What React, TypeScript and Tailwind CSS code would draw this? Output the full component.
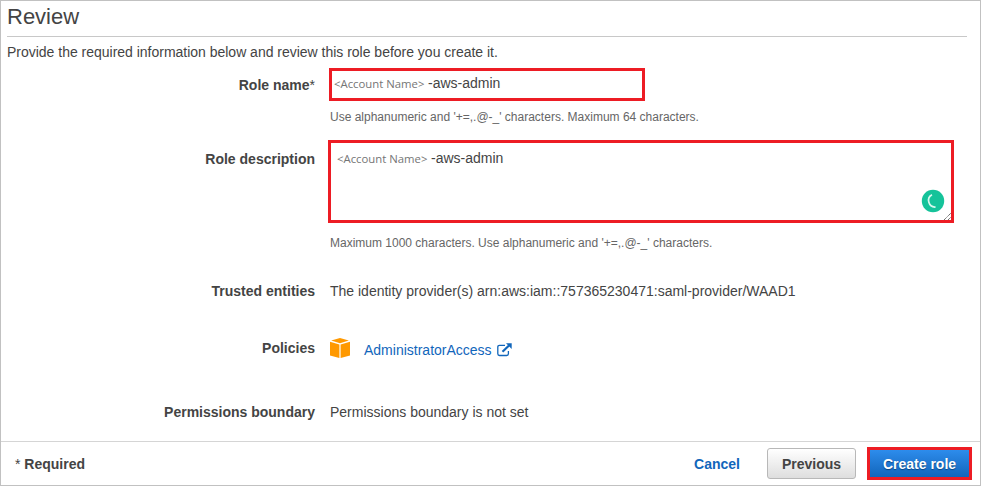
import type { ReactNode } from 'react';

function Label({ children, className = '' }: { children: ReactNode; className?: string }) {
  return (
    <div className={`w-[314px] shrink-0 text-right text-[14px] leading-5 font-bold ${className}`}>{children}</div>
  );
}

function AccountName() {
  return (
    <span className="inline-block w-[94px] shrink-0 pt-px whitespace-nowrap font-['Open_Sans','Noto_Sans',sans-serif] text-[11.35px] leading-5 text-[#757575]">
      &lt;Account Name&gt;
    </span>
  );
}

function PolicyCube() {
  return (
    <svg width="20" height="20" viewBox="0 0 20 20" fill="#ff9900" className="shrink-0">
      <path d="M10 0 18.8 2.6 10 5.2 1.2 2.6Z" />
      <path d="M0 3.8 9.4 6.6V20L0 17.6Z" />
      <path d="M20 3.8 10.6 6.6V20L20 17.6Z" />
    </svg>
  );
}

function ExternalLink() {
  return (
    <svg width="15" height="14" viewBox="0 0 15 14" fill="none" stroke="#1166bb" className="shrink-0">
      <path d="M8 2.3H2.5Q.8 2.3.8 4V10.8Q.8 12.5 2.5 12.5H9.7Q11.4 12.5 11.4 10.8V8" strokeWidth="1.3" />
      <path d="M5.5 8.7 12 2.5" strokeWidth="2.2" />
      <path d="M9 .3H14.7V6Z" fill="#1166bb" stroke="none" />
    </svg>
  );
}

export default function App() {
  return (
    <div className="flex h-[486px] w-[981px] flex-col overflow-hidden border border-[#c1c1c1] bg-white font-['Liberation_Sans',Arial,sans-serif] text-[14px] leading-5 text-[#444]">
      <h1 className="ml-1.5 h-9 w-[960px] shrink-0 border-b border-[#c8c8c8] text-[22px] leading-8">Review</h1>
      <p className="mt-[5px] ml-1.5 h-[26px] shrink-0 tracking-[-0.012px]">
        Provide the required information below and review this role before you create it.
      </p>

      <div className="flex h-[72px] shrink-0">
        <Label className="pt-[7px]">
          Role name<span className="font-normal">*</span>
        </Label>
        <div className="ml-[14px]">
          <div className="flex h-[33px] w-[316px] border-[3px] border-[#ed1c24] pt-[2px] pl-[2px]">
            <AccountName />
            <span>-aws-admin</span>
          </div>
          <p className="mt-[6px] ml-px text-[12px] text-[#666]">
            Use alphanumeric and '+=,.@-_' characters. Maximum 64 characters.
          </p>
        </div>
      </div>

      <div className="flex h-[141px] shrink-0">
        <Label className="pt-[9px]">Role description</Label>
        <div className="ml-[13px]">
          <div className="relative flex h-[83px] w-[626px] border-[3px] border-[#ed1c24] pt-[5px] pl-[6px]">
            <AccountName />
            <span>-aws-admin</span>
            <svg className="absolute right-[6px] bottom-[7px]" width="24" height="24" viewBox="0 0 24 24" fill="none">
              <circle cx="12" cy="12" r="11.2" fill="#15c39a" />
              <path d="M11 5.8A6.5 6.5 0 0 0 14.6 18" stroke="#d8f8ee" strokeWidth="1.7" />
            </svg>
            <svg className="absolute right-0 bottom-0" width="7" height="7" viewBox="0 0 7 7" stroke="#555">
              <path d="M0 7 7 0M4 7 7 4" strokeDasharray="1.2 .6" />
            </svg>
          </div>
          <p className="mt-[10px] ml-[2px] text-[12px] text-[#666]">
            Maximum 1000 characters. Use alphanumeric and '+=,.@-_' characters.
          </p>
        </div>
      </div>

      <div className="flex h-[57px] shrink-0">
        <Label>Trusted entities</Label>
        <p className="ml-[15px]">The identity provider(s) arn:aws:iam::757365230471:saml-provider/WAAD1</p>
      </div>

      <div className="flex h-16 shrink-0">
        <Label>Policies</Label>
        <div className="ml-[15px] flex h-5 items-center">
          <PolicyCube />
          <a className="mt-1 ml-[14px] flex items-center gap-[5px] text-[#1166bb]">
            AdministratorAccess
            <ExternalLink />
          </a>
        </div>
      </div>

      <div className="flex h-[39px] shrink-0">
        <Label>Permissions boundary</Label>
        <p className="ml-[15px]">Permissions boundary is not set</p>
      </div>

      <footer className="flex h-[44px] shrink-0 items-center border-t border-[#d5d5d5] pr-[8px] pl-[14px] font-bold">
        <span>
          <span className="font-normal">*</span> Required
        </span>
        <a className="ml-auto text-[#1166bb]">Cancel</a>
        <button className="ml-[27px] h-[31px] w-[89px] rounded-[3px] border border-[#b8b8b8] bg-linear-to-b from-white to-[#dedede]">
          Previous
        </button>
        <button className="ml-[11px] h-[33px] w-[105px] border-[3px] border-[#ed1c24] bg-linear-to-b from-[#2d8cec] to-[#1166bb] text-white [text-shadow:0_1px_1px_#0b4580]">
          Create role
        </button>
      </footer>
    </div>
  );
}
